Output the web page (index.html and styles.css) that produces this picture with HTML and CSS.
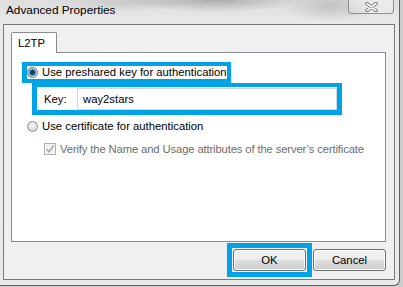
FILE: index.html
```html
<!DOCTYPE html>
<html lang="en">
<head>
    <meta charset="UTF-8">
    <title>Advanced Properties</title>
    <link rel="stylesheet" href="styles.css">
</head>
<body>
    <div class="window">
        <div class="titlebar">
            <span class="title">Advanced Properties</span>
            <button class="close-btn">
                <svg width="13" height="10" viewBox="0 0 13 10">
                    <path d="M2 1.5 L11 8.5 M11 1.5 L2 8.5" stroke="#6b6b6b" stroke-width="3.4" stroke-linecap="round"/>
                    <path d="M2 1.5 L11 8.5 M11 1.5 L2 8.5" stroke="#fdfdfd" stroke-width="1.6" stroke-linecap="round"/>
                </svg>
            </button>
        </div>
        <div class="client">
            <div class="tabs">
                <div class="tab">L2TP</div>
                <div class="tab-rest"></div>
            </div>
            <div class="panel">
                <div class="mark mark-option">
                    <label class="option"><span class="radio checked"></span>Use preshared key for authentication</label>
                </div>
                <div class="mark mark-key">
                    <span class="key-label">Key:</span>
                    <input class="key-input" type="text" value="way2stars" readonly>
                </div>
                <label class="option option-cert"><span class="radio"></span>Use certificate for authentication</label>
                <label class="check-row">
                    <span class="checkbox">
                        <svg width="10" height="10" viewBox="0 0 10 10">
                            <path d="M1.5 5.2 L4 7.8 L8.6 1.6" fill="none" stroke="#a9a9a9" stroke-width="1.6"/>
                        </svg>
                    </span>Verify the Name and Usage attributes of the server’s certificate
                </label>
            </div>
            <div class="buttons">
                <div class="mark mark-ok">
                    <button class="btn">OK</button>
                </div>
                <button class="btn">Cancel</button>
            </div>
        </div>
    </div>
</body>
</html>
```

FILE: styles.css
```css
body {
    margin: 0;
    background: #cdcdcd;
    font-family: "Liberation Sans", Arial, sans-serif;
    font-size: 11.3px;
    color: #000;
}
.window {
    width: 400px;
    height: 286px;
    box-sizing: border-box;
    border-right: 1px solid #5f5f5f;
    border-bottom: 1px solid #5f5f5f;
    border-bottom-right-radius: 6px;
    overflow: hidden;
    /* blurred aero glass */
    background:
        radial-gradient(ellipse 90px 12px at 215px 0, rgba(110, 110, 110, 0.45), transparent),
        radial-gradient(ellipse 50px 16px at 330px 6px, rgba(150, 150, 150, 0.4), transparent),
        radial-gradient(ellipse 70px 10px at 120px 2px, rgba(160, 160, 160, 0.35), transparent),
        linear-gradient(#dedede, #ececec 30px, #e9e9e9);
}
.titlebar {
    height: 24px;
    display: flex;
    justify-content: space-between;
    align-items: flex-start;
}
.title {
    padding: 3px 0 0 6px;
    font-size: 11.8px;
    line-height: 14px;
}
.close-btn {
    width: 46px;
    height: 14px;
    margin-right: 5px;
    padding: 0;
    border: 1px solid rgba(70, 70, 70, 0.55);
    border-top: none;
    border-radius: 0 0 4px 4px;
    background: linear-gradient(rgba(255, 255, 255, 0.45), rgba(255, 255, 255, 0.15));
    display: flex;
    align-items: center;
    justify-content: center;
}
.client {
    margin-left: 3px;
    width: 392px;
    height: 256px;
    box-sizing: border-box;
    border: 1px solid #7a7a7a;
    background: #f0f0f0;
    padding: 7px 8px 8px 7px;
    display: flex;
    flex-direction: column;
}
.tabs {
    display: flex;
    height: 21px;
}
.tab {
    width: 46px;
    box-sizing: border-box;
    border: 1px solid #898c95;
    border-bottom: none;
    border-radius: 2px 2px 0 0;
    background: #fff;
    padding: 4px 0 0 6px;
    line-height: 13px;
}
.tab-rest {
    flex: 1;
    border-bottom: 1px solid #898c95;
}
.panel {
    height: 189px;
    box-sizing: border-box;
    border: 1px solid #898c95;
    border-top: none;
    background: #fff;
    padding: 9px 0 0 10px;
}
/* blue annotation boxes */
.mark {
    box-sizing: border-box;
    border: 4px solid #00a2e8;
}
.mark-option {
    width: 209px;
    height: 21px;
    border-left-width: 5px;
    display: flex;
    align-items: center;
}
.mark-key {
    width: 310px;
    height: 32px;
    margin-left: 10px;
    border-width: 4px 5px 5px 5px;
    padding: 1px 0 0 7px;
    display: flex;
    align-items: center;
}
.mark-ok {
    border-width: 5px;
    padding: 1px;
    margin: -6px;
    display: flex;
}
.key-label {
    width: 33px;
}
.key-input {
    flex: 1;
    height: 22px;
    box-sizing: border-box;
    border: 1px solid #d3d6db;
    padding: 0 0 0 5px;
    font-family: inherit;
    font-size: inherit;
    color: #000;
    outline: none;
}
.option {
    display: flex;
    align-items: center;
    line-height: 15px;
}
.option-cert {
    margin: 4px 0 0 5px;
}
.radio {
    width: 11px;
    height: 11px;
    box-sizing: border-box;
    flex: none;
    margin-right: 4px;
    border-radius: 50%;
    border: 1px solid #8e8f8f;
    background: radial-gradient(circle at 50% 40%, #f7f7f7, #cfcfcf);
}
.radio.checked {
    border-color: #5d7d99;
    background: radial-gradient(circle at 50% 50%, #1b3d5f 0 2px, #4f9ad3 3px, #cfe6f7 4.5px, #e6e6e6 5px);
}
.check-row {
    display: flex;
    align-items: center;
    line-height: 14px;
    margin: 8px 0 0 22px;
    color: #6d6d6d;
    letter-spacing: -0.15px;
}
.checkbox {
    width: 12px;
    height: 12px;
    box-sizing: border-box;
    flex: none;
    margin-right: 4px;
    border: 1px solid #b1b1b1;
    background: #f4f4f4;
    display: flex;
    align-items: center;
    justify-content: center;
}
.buttons {
    display: flex;
    justify-content: flex-end;
    align-items: flex-start;
    gap: 7px;
    margin-top: 7px;
}
.btn {
    width: 73px;
    height: 22px;
    padding: 0;
    border: 1px solid #707070;
    border-radius: 3px;
    background: linear-gradient(#f2f2f2, #ebebeb 50%, #dddddd 50%, #cfcfcf);
    box-shadow: inset 0 0 0 1px #fbfbfb;
    font-family: inherit;
    font-size: 11.3px;
    color: #000;
}
```
